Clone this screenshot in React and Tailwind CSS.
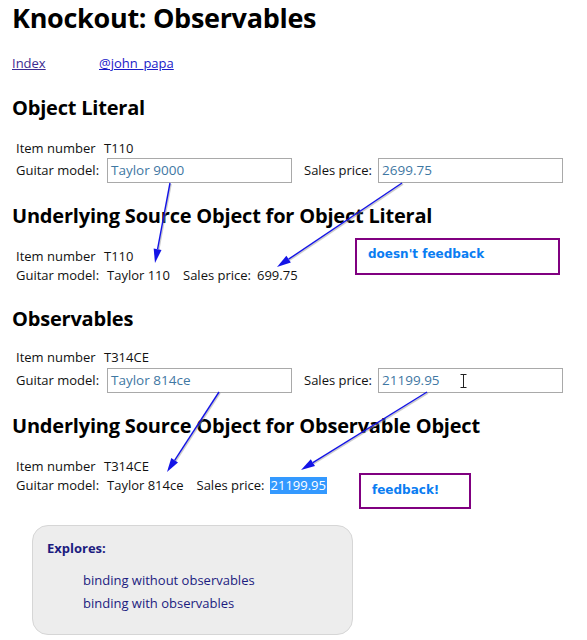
import React from 'react';

const FONT = { fontFamily: '"Open Sans", "Liberation Sans", sans-serif' };
const PIXEL_FONT = { fontFamily: '"DejaVu Sans", Verdana, sans-serif' };

// Arrow annotations drawn over the page
const ARROWS = [
  { x1: 170, y1: 183, x2: 155, y2: 263 },
  { x1: 402, y1: 183, x2: 277, y2: 267 },
  { x1: 219, y1: 392, x2: 167, y2: 472 },
  { x1: 427, y1: 392, x2: 301, y2: 470 },
];

const Arrow = ({ x1, y1, x2, y2 }) => {
  const dx = x2 - x1;
  const dy = y2 - y1;
  const len = Math.sqrt(dx * dx + dy * dy);
  const ux = dx / len;
  const uy = dy / len;
  const hl = 14;
  const hw = 4;
  const bx = x2 - ux * hl;
  const by = y2 - uy * hl;
  const p1 = `${bx - uy * hw},${by + ux * hw}`;
  const p2 = `${bx + uy * hw},${by - ux * hw}`;
  return (
    <g>
      <line x1={x1 + 1} y1={y1 + 1} x2={bx + 1} y2={by + 1} stroke="#9a9a9a" strokeOpacity="0.5" strokeWidth="1.6" />
      <line x1={x1} y1={y1} x2={bx} y2={by} stroke="#1414e6" strokeWidth="1.4" />
      <polygon points={`${x2},${y2} ${p1} ${p2}`} fill="#1414e6" />
    </g>
  );
};

const Field = ({ value }) => (
  <div className="w-[185px] h-[25px] border border-[#a9a9a9] bg-white flex items-center pl-[3px] text-[13.5px] text-[#3f78a3]">
    {value}
  </div>
);

const Heading = ({ children, className }) => (
  <h2 className={"text-[20px] font-bold leading-[26px] text-black tracking-[-0.2px] " + (className || '')}>{children}</h2>
);

const App = () => {
  return (
    <div className="relative w-[587px] h-[640px] overflow-hidden bg-white text-[#111] pl-[12px] text-[13px]" style={FONT}>
      {/* Title */}
      <h1 className="text-[27px] font-bold leading-[36px] text-black tracking-[-0.3px]">Knockout: Observables</h1>

      {/* Nav links */}
      <div className="mt-[18px] flex leading-[18px]">
        <a href="#" className="underline text-[#3b2b91] w-[87px]">Index</a>
        <a href="#" className="underline text-[#1a1ac8]">@john_papa</a>
      </div>

      {/* Object Literal */}
      <Heading className="mt-[23px]">Object Literal</Heading>
      <div className="pl-[4px] mt-[19px]">
        <div className="flex items-center h-[18px]">
          <span className="w-[88px]">Item number</span>
          <span>T110</span>
        </div>
        <div className="flex items-center h-[25px]">
          <span className="w-[91px]">Guitar model:</span>
          <Field value="Taylor 9000" />
          <span className="ml-[12px] w-[74px]">Sales price:</span>
          <Field value="2699.75" />
        </div>
      </div>

      <Heading className="mt-[20px]">Underlying Source Object for Object Literal</Heading>
      <div className="flex mt-[9px]">
        <div className="pl-[4px] pt-[9px] w-[343px]">
          <div className="flex items-center h-[19px]">
            <span className="w-[88px]">Item number</span>
            <span>T110</span>
          </div>
          <div className="flex items-center h-[19px]">
            <span className="w-[91px]">Guitar model:</span>
            <span>Taylor 110</span>
            <span className="ml-[13px] w-[74px]">Sales price:</span>
            <span>699.75</span>
          </div>
        </div>
        <div className="w-[205px] h-[37px] border-2 border-[#800080] pl-[11px] pt-[6px] text-[12px] font-bold text-[#0a7df2] leading-[16px]" style={PIXEL_FONT}>
          doesn't feedback
        </div>
      </div>

      {/* Observables */}
      <Heading className="mt-[21px]">Observables</Heading>
      <div className="pl-[4px] mt-[17px]">
        <div className="flex items-center h-[18px]">
          <span className="w-[88px]">Item number</span>
          <span>T314CE</span>
        </div>
        <div className="flex items-center h-[25px] mt-[1px]">
          <span className="w-[91px]">Guitar model:</span>
          <Field value="Taylor 814ce" />
          <span className="ml-[12px] w-[74px]">Sales price:</span>
          <div className="relative">
            <Field value="21199.95" />
            {/* text cursor */}
            <svg className="absolute left-[82px] top-[6px]" width="7" height="14" viewBox="0 0 7 14">
              <path d="M0.5 0.5h6M3.5 0.5v13M0.5 13.5h6" stroke="#222" strokeWidth="1" fill="none" />
            </svg>
          </div>
        </div>
      </div>

      <Heading className="mt-[20px]">Underlying Source Object for Observable Object</Heading>
      <div className="flex mt-[9px]">
        <div className="pl-[4px] pt-[9px] w-[347px]">
          <div className="flex items-center h-[19px]">
            <span className="w-[88px]">Item number</span>
            <span>T314CE</span>
          </div>
          <div className="flex items-center h-[19px]">
            <span className="w-[91px]">Guitar model:</span>
            <span>Taylor 814ce</span>
            <span className="ml-[13px] w-[73px]">Sales price:</span>
            <span className="bg-[#3399ff] text-white px-[1px] leading-[17px]">21199.95</span>
          </div>
        </div>
        <div className="mt-[25px] w-[112px] h-[36px] border-2 border-[#800080] pl-[11px] pt-[7px] text-[12px] font-bold text-[#0a7df2] leading-[16px]" style={PIXEL_FONT}>
          feedback!
        </div>
      </div>

      {/* Explores box */}
      <div className="ml-[20px] mt-[16px] w-[321px] h-[110px] rounded-[16px] bg-[#ededed] border border-[#d6d6d6] pl-[14px] pt-[13px] text-[#1c1c80]">
        <div className="font-bold leading-[18px]">Explores:</div>
        <div className="pl-[36px] mt-[12px] leading-[23px]">
          <div>binding without observables</div>
          <div>binding with observables</div>
        </div>
      </div>

      {/* Arrow annotations */}
      <svg className="absolute inset-0 pointer-events-none" width="587" height="640">
        {ARROWS.map((a, i) => (
          <Arrow key={i} {...a} />
        ))}
      </svg>
    </div>
  );
};

export default App;
